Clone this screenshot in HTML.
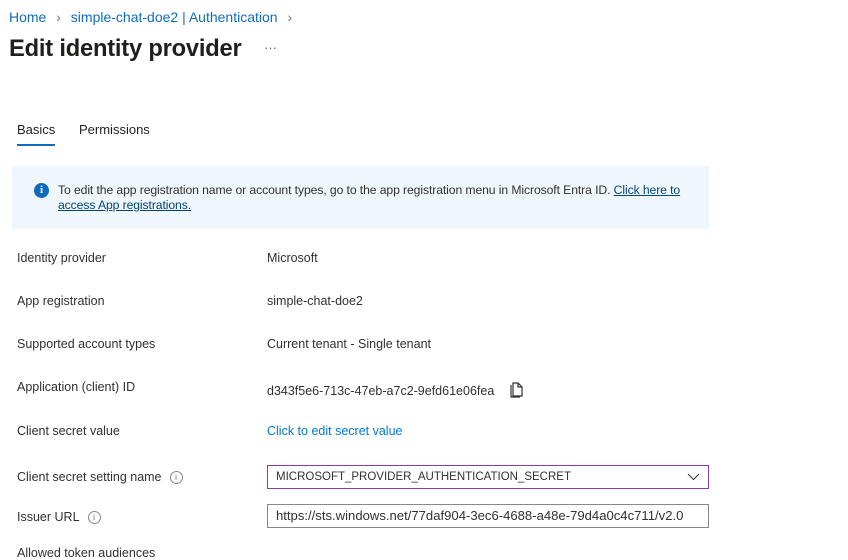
<!DOCTYPE html>
<html><head><meta charset="utf-8"><style>
body{margin:0;width:848px;height:559px;background:#fff;font-family:"Liberation Sans",sans-serif;color:#323130;position:relative;overflow:hidden}
.a{position:absolute;white-space:nowrap}
.l{font-size:12.5px;color:#323130}
.blue{color:#0f6cbd}
.box{position:absolute;left:267px;width:432px;height:22px;border:1px solid #8a8886;font-size:12.5px;line-height:22px;padding-left:8px;box-sizing:content-box;overflow:hidden}
.info{display:inline-block;width:11px;height:11px;border:1px solid #8a8886;border-radius:50%;font-size:8px;line-height:11px;text-align:center;color:#605e5c;vertical-align:middle;margin-left:8px}
</style></head><body>
<div class="a blue" style="left:9px;top:9px;font-size:14px">Home <span style="color:#777;margin:0 6px">›</span> simple-chat-doe2 | Authentication <span style="color:#777;margin-left:6px">›</span></div>
<div class="a" style="left:9px;top:36px;font-size:23.7px;font-weight:bold;color:#201f1e;letter-spacing:-0.2px">Edit identity provider</div>
<div class="a" style="left:264px;top:40px;font-size:13px;color:#605e5c">···</div>
<div class="a" style="left:17px;top:122px;font-size:13px;color:#201f1e">Basics</div>
<div class="a" style="left:17px;top:144px;width:38px;height:2px;background:#0f6cbd"></div>
<div class="a" style="left:79px;top:122px;font-size:13px;color:#201f1e">Permissions</div>
<div class="a" style="left:12px;top:166px;width:697px;height:63px;background:#eff6fc"></div>
<div class="a" style="left:34px;top:183px;width:15px;height:15px;border-radius:50%;background:#0f6cbd;color:#fff;font-size:11px;font-weight:bold;text-align:center;line-height:15px;font-family:'Liberation Serif',serif">i</div>
<div class="a" style="left:58px;top:183px;font-size:12.2px;line-height:15px;color:#323130;letter-spacing:-0.1px">To edit the app registration name or account types, go to the app registration menu in Microsoft Entra ID. <u style="color:#004578">Click here to</u><br><u style="color:#004578">access App registrations.</u></div>
<div class="a l" style="left:17px;top:251px">Identity provider</div><div class="a l" style="left:267px;top:251px">Microsoft</div>
<div class="a l" style="left:17px;top:294px">App registration</div><div class="a l" style="left:267px;top:294px">simple-chat-doe2</div>
<div class="a l" style="left:17px;top:337px">Supported account types</div><div class="a l" style="left:267px;top:337px">Current tenant - Single tenant</div>
<div class="a l" style="left:17px;top:380px">Application (client) ID</div><div class="a l" style="left:267px;top:384px;font-size:12.5px">d343f5e6-713c-47eb-a7c2-9efd61e06fea</div>
<svg class="a" style="left:509px;top:381px" width="17" height="17" viewBox="0 0 17 17" fill="none" stroke="#323130" stroke-width="1.2"><path d="M4 2h5l4 4v9H4z"/><path d="M9 2v4h4"/><path d="M2 4v12h9" /></svg>
<div class="a l" style="left:17px;top:424px">Client secret value</div><div class="a l blue" style="left:267px;top:424px;color:#0078d4">Click to edit secret value</div>
<div class="a l" style="left:17px;top:470px">Client secret setting name<span class="info">i</span></div>
<div class="box" style="top:465px;border-color:#8a3ab0;font-size:11.5px">MICROSOFT_PROVIDER_AUTHENTICATION_SECRET</div>
<svg class="a" style="left:687px;top:473px" width="13" height="8"><path d="M1 1l5.5 5.5L12 1" stroke="#323130" fill="none"/></svg>
<div class="a l" style="left:17px;top:510px">Issuer URL<span class="info">i</span></div>
<div class="box" style="top:504px;font-size:13.1px">https://sts.windows.net/77daf904-3ec6-4688-a48e-79d4a0c4c711/v2.0</div>
<div class="a l" style="left:17px;top:546px">Allowed token audiences</div>
</body></html>
